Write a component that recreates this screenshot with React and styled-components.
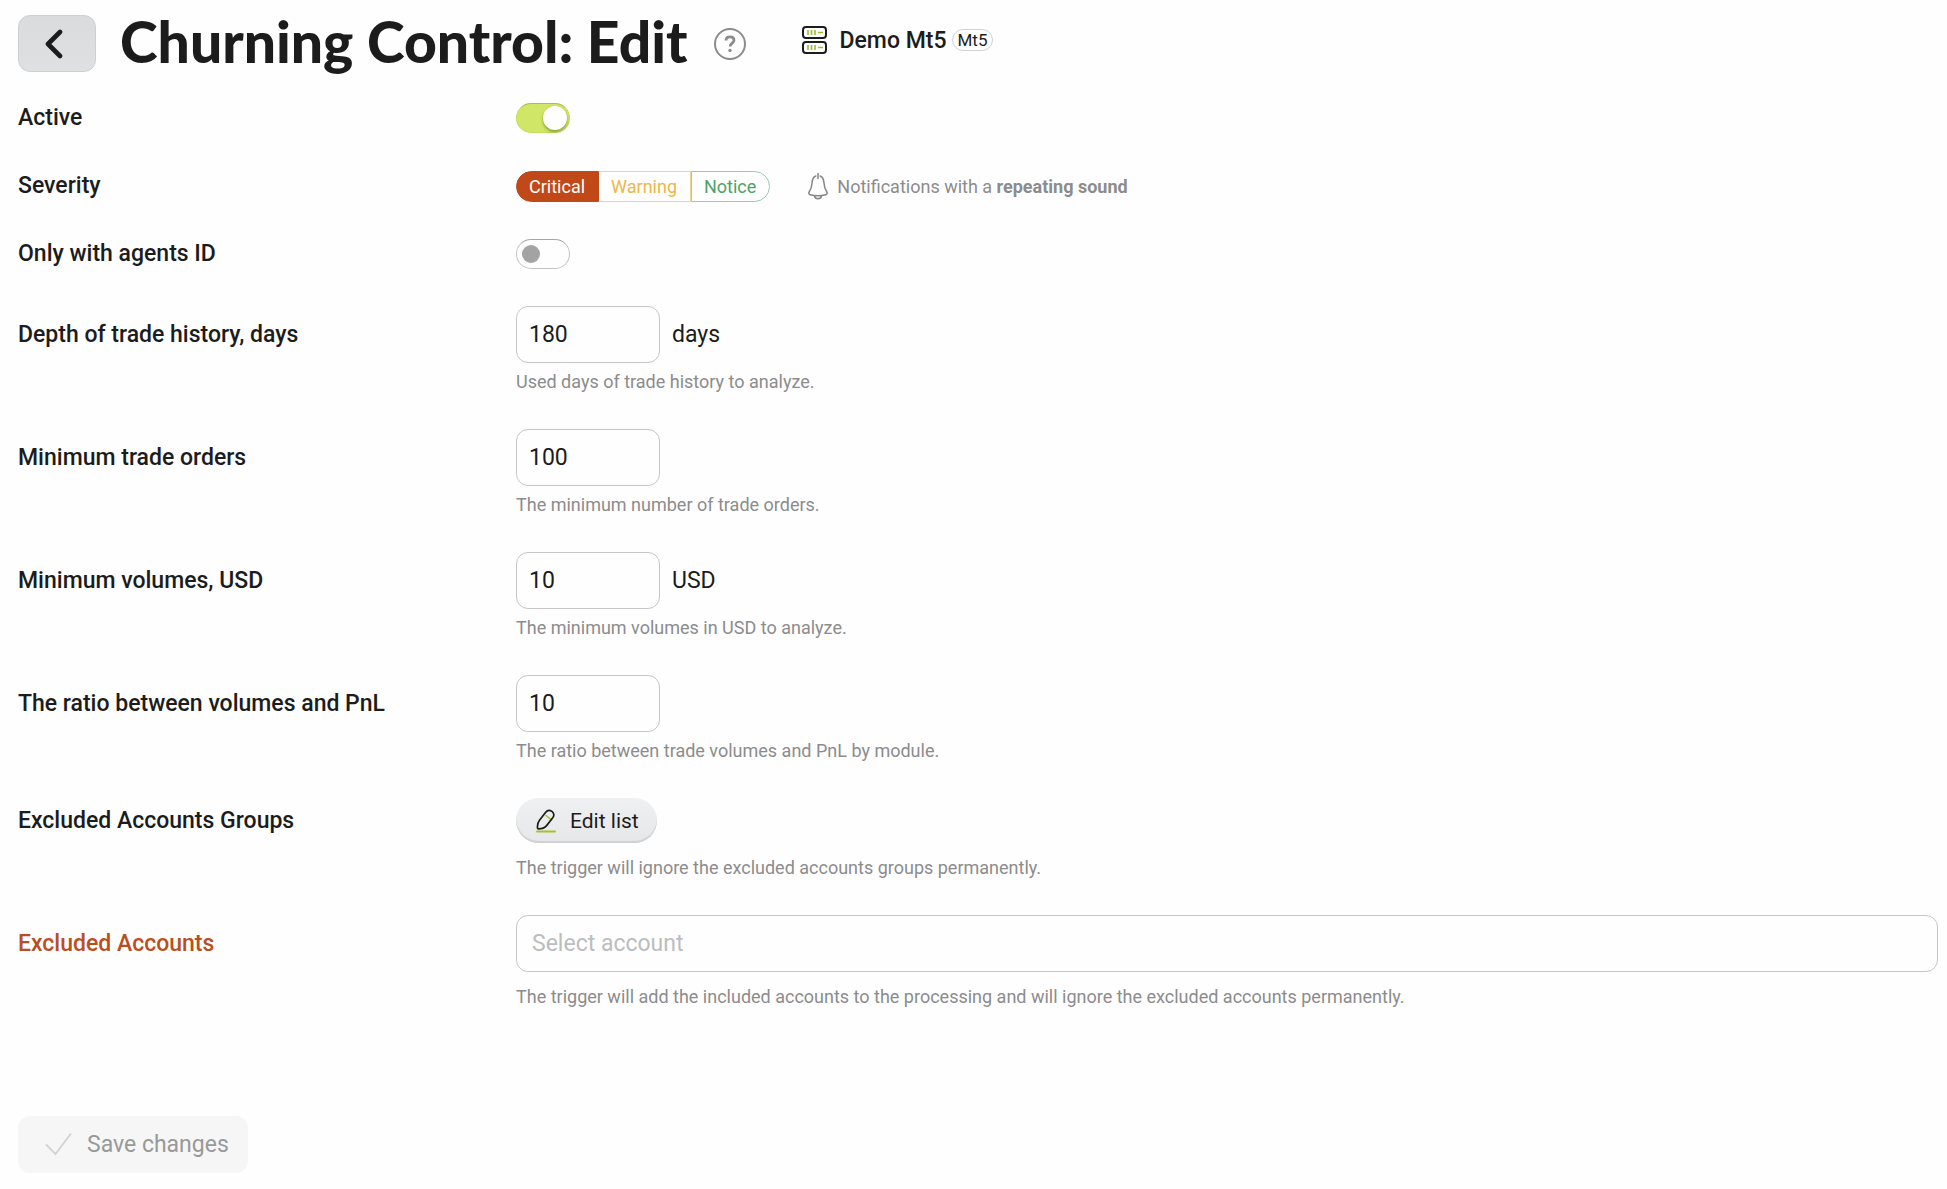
import React, { useState } from 'react';
import styled, { createGlobalStyle, css } from 'styled-components';

const GlobalStyle = createGlobalStyle`
  * {
    box-sizing: border-box;
  }
  body {
    margin: 0;
    background: #fefefe;
    color: #1c1c1c;
    font-family: Roboto, sans-serif;
    font-size: 23px;
  }
  button,
  input {
    font: inherit;
    color: inherit;
  }
`;

const Page = styled.main`
  padding: 15px 9px 16px 18px;
`;

const Header = styled.header`
  display: flex;
  align-items: center;
  height: 57px;
  margin-bottom: 12px;
`;

const BackButton = styled.button`
  display: flex;
  align-items: center;
  justify-content: center;
  width: 78px;
  height: 57px;
  padding: 0 6px 0 0;
  border: 1px solid #cdcfd1;
  border-radius: 12px;
  background: linear-gradient(#d9dbdc, #dee0e1);
  cursor: pointer;
`;

const Title = styled.h1`
  margin: 0 0 0 24px;
  padding-bottom: 4px;
  font-family: Lato, sans-serif;
  font-size: 57px;
  font-weight: 900;
  line-height: 57px;
  white-space: nowrap;
`;

const HelpButton = styled.button`
  display: flex;
  margin: 0 0 0 26px;
  padding: 0;
  border: 0;
  background: none;
  cursor: pointer;
`;

const Server = styled.div`
  display: flex;
  align-items: center;
  align-self: flex-start;
  height: 50px;
  margin-left: 56px;
  font-weight: 500;
`;

const ServerName = styled.span`
  margin: 0 5px 0 12px;
`;

const Badge = styled.span`
  height: 22px;
  padding: 0 5px;
  border: 1px solid #d2d2d2;
  border-radius: 11px;
  font-size: 17px;
  font-weight: 400;
  line-height: 20px;
`;

const Row = styled.div`
  display: grid;
  grid-template-columns: 498px minmax(0, 1fr);
  align-items: center;
  ${({ $compact }) =>
    $compact
      ? css`
          height: 68px;
        `
      : css`
          padding: 18px 0 17px;
        `}
`;

const Label = styled.label`
  font-weight: 500;
  line-height: 30px;
  color: ${({ $error }) => ($error ? '#b94f20' : 'inherit')};
`;

const Control = styled.div`
  display: flex;
  align-items: center;
`;

const Hint = styled.p`
  grid-column: 2;
  margin: ${({ $spaced }) => ($spaced ? '13px' : '7px')} 0 0;
  font-size: 18px;
  line-height: 24px;
  color: #8c8c8c;
`;

const Toggle = styled.input`
  appearance: none;
  display: flex;
  align-items: center;
  width: 54px;
  height: 30px;
  margin: 0;
  padding: 0 5px;
  border: 1px solid #c4c4c4;
  border-top-color: #a6a6a6;
  border-radius: 15px;
  background: #fefefe;
  cursor: pointer;
  &::before {
    content: '';
    width: 18px;
    height: 18px;
    border-radius: 50%;
    background: #a3a3a3;
  }
  &:checked {
    justify-content: flex-end;
    padding: 0 2px;
    border-color: #c5dc5f;
    border-top-color: #a9bc55;
    background: #cfe666;
  }
  &:checked::before {
    width: 24px;
    height: 24px;
    background: #fff;
    box-shadow: 0 2px 3px rgba(70, 90, 0, 0.5);
  }
`;

const Severity = styled.div`
  display: flex;
  font-size: 18px;
`;

const tones = {
  critical: { color: '#c14817', border: '#c14817' },
  warning: { color: '#ecb748', border: '#ead98a' },
  notice: { color: '#4ca268', border: '#98cbb7' },
};

const Option = styled.label`
  height: 31px;
  padding: 0 13px 0 12px;
  border: 1px solid ${({ $tone }) => tones[$tone].border};
  border-left-width: ${({ $tone }) => ($tone === 'warning' ? 0 : '1px')};
  color: ${({ $tone }) => tones[$tone].color};
  line-height: 29px;
  cursor: pointer;
  input {
    appearance: none;
    position: absolute;
    margin: 0;
  }
  &:first-child {
    border-radius: 16px 0 0 16px;
  }
  &:last-child {
    border-radius: 0 16px 16px 0;
  }
  &:has(input:checked) {
    background: ${({ $tone }) => tones[$tone].color};
    color: #fff;
  }
`;

const Notification = styled.span`
  display: flex;
  align-items: center;
  gap: 9px;
  margin-left: 38px;
  font-size: 18px;
  color: #8c8c8c;
`;

const TextInput = styled.input`
  width: ${({ $wide }) => ($wide ? '100%' : '144px')};
  height: 57px;
  padding: 0 ${({ $wide }) => ($wide ? '15px' : '12px')};
  border: 1px solid #c6c6c6;
  border-radius: 12px;
  background: #fefefe;
  &::placeholder {
    color: #bdbdbd;
    opacity: 1;
  }
`;

const Unit = styled.span`
  margin-left: 12px;
`;

const EditButton = styled.button`
  display: flex;
  align-items: center;
  gap: 13px;
  height: 45px;
  padding: 0 18px 0 19px;
  border: 0;
  border-radius: 23px;
  background: linear-gradient(#eef0f1, #e6e7e8);
  box-shadow: inset 0 -2px 1px #cfd0d1;
  font-size: 21px;
  cursor: pointer;
`;

const SaveButton = styled.button`
  display: flex;
  align-items: center;
  gap: 14px;
  height: 57px;
  margin-top: 90px;
  padding: 0 19px 0 26px;
  border: 0;
  border-radius: 12px;
  background: #f6f6f6;
  &:disabled {
    color: #999;
  }
`;

const BackIcon = () => (
  <svg width="18" height="30" viewBox="0 0 18 30" fill="none">
    <path
      d="M15 3 3 15l12 12"
      stroke="#1c1c1c"
      strokeWidth="4.6"
      strokeLinecap="round"
      strokeLinejoin="round"
    />
  </svg>
);

const HelpIcon = () => (
  <svg width="32" height="32" viewBox="0 0 32 32" fill="none" stroke="#8c8c8c">
    <circle cx="16" cy="16" r="15" strokeWidth="2" />
    <path
      d="M12 12.6c0-2.3 1.6-3.8 4-3.8s4 1.4 4 3.5c0 2.8-3.9 3-3.9 6.2"
      strokeWidth="2.8"
    />
    <circle cx="16" cy="22.4" r="1.7" fill="#8c8c8c" stroke="none" />
  </svg>
);

const ServerIcon = () => (
  <svg width="26" height="28" viewBox="0 0 26 28" fill="none">
    <g stroke="#1c1c1c" strokeWidth="2">
      <rect x="1" y="1" width="23" height="11" rx="3" />
      <rect x="1" y="16" width="23" height="11" rx="3" />
    </g>
    <path
      d="M6 4v5M9.5 4v5M13 4v5M16 6.5h5M6 19v5M9.5 19v5M13 19v5M16 21.5h5"
      stroke="#9dbb2d"
      strokeWidth="1.6"
    />
  </svg>
);

const BellIcon = () => (
  <svg
    width="20"
    height="28"
    viewBox="0 0 20 28"
    fill="none"
    stroke="#858585"
    strokeWidth="1.5"
    strokeLinecap="round"
    strokeLinejoin="round"
  >
    <path d="M10 1.5v5M7.8 4C5 5 4.3 7.5 4 11c-.3 4.5-.8 6-2.6 8.5-1 1.5-.6 2.8.8 3.2 5 1.4 10.6 1.4 15.6 0 1.4-.4 1.8-1.7.8-3.2C16.8 17 16.3 15.5 16 11c-.3-3.5-1-6-3.8-7" />
    <path d="M6.5 24c.4 1.7 1.7 2.7 3.5 2.7s3.1-1 3.5-2.7" />
  </svg>
);

const EditIcon = () => (
  <svg width="22" height="24" viewBox="0 0 22 24" fill="none" strokeLinecap="round">
    <path d="m11 6.5 5.5 4.5" stroke="#a4c22f" strokeWidth="1.6" />
    <path
      d="M2.5 18.8c-.3-3.3.2-5.2 2-7.5l6.2-8.1C12.2 1.3 14.8.9 16.9 2.4s2.5 4.2 1 6.2l-6.3 8c-2 2.4-4.7 3.2-8.1 3.2-.7 0-1-.3-1-1Z"
      stroke="#1c1c1c"
      strokeWidth="1.7"
    />
    <path d="M2 22.5h18" stroke="#a4c22f" strokeWidth="1.8" />
  </svg>
);

const CheckIcon = () => (
  <svg width="29" height="26" viewBox="0 0 29 26" fill="none">
    <path d="M2 12.5 11.5 22 27 1.5" stroke="#d4d4d4" strokeWidth="2" />
  </svg>
);

const fields = [
  {
    id: 'depth',
    label: 'Depth of trade history, days',
    value: '180',
    unit: 'days',
    hint: 'Used days of trade history to analyze.',
  },
  {
    id: 'orders',
    label: 'Minimum trade orders',
    value: '100',
    hint: 'The minimum number of trade orders.',
  },
  {
    id: 'volumes',
    label: 'Minimum volumes, USD',
    value: '10',
    unit: 'USD',
    hint: 'The minimum volumes in USD to analyze.',
  },
  {
    id: 'ratio',
    label: 'The ratio between volumes and PnL',
    value: '10',
    hint: 'The ratio between trade volumes and PnL by module.',
  },
];

const App = () => {
  const [severity, setSeverity] = useState('critical');

  return (
    <Page>
      <GlobalStyle />
      <Header>
        <BackButton type="button" aria-label="Back">
          <BackIcon />
        </BackButton>
        <Title>Churning Control: Edit</Title>
        <HelpButton type="button" aria-label="Help">
          <HelpIcon />
        </HelpButton>
        <Server>
          <ServerIcon />
          <ServerName>Demo Mt5</ServerName>
          <Badge>Mt5</Badge>
        </Server>
      </Header>
      <form>
        <Row $compact>
          <Label htmlFor="active">Active</Label>
          <Toggle id="active" type="checkbox" role="switch" defaultChecked />
        </Row>
        <Row $compact>
          <Label as="span" id="severity">
            Severity
          </Label>
          <Control>
            <Severity role="radiogroup" aria-labelledby="severity">
              {['Critical', 'Warning', 'Notice'].map(name => {
                const tone = name.toLowerCase();
                return (
                  <Option key={tone} $tone={tone}>
                    <input
                      type="radio"
                      name="severity"
                      value={tone}
                      checked={severity === tone}
                      onChange={() => setSeverity(tone)}
                    />
                    {name}
                  </Option>
                );
              })}
            </Severity>
            <Notification>
              <BellIcon />
              <span>
                Notifications with a <b>repeating sound</b>
              </span>
            </Notification>
          </Control>
        </Row>
        <Row $compact>
          <Label htmlFor="agents">Only with agents ID</Label>
          <Toggle id="agents" type="checkbox" role="switch" />
        </Row>
        {fields.map(({ id, label, value, unit, hint }) => (
          <Row key={id}>
            <Label htmlFor={id}>{label}</Label>
            <Control>
              <TextInput id={id} type="text" inputMode="numeric" defaultValue={value} />
              {unit && <Unit>{unit}</Unit>}
            </Control>
            <Hint>{hint}</Hint>
          </Row>
        ))}
        <Row>
          <Label htmlFor="groups">Excluded Accounts Groups</Label>
          <Control>
            <EditButton id="groups" type="button">
              <EditIcon />
              Edit list
            </EditButton>
          </Control>
          <Hint $spaced>
            The trigger will ignore the excluded accounts groups permanently.
          </Hint>
        </Row>
        <Row>
          <Label htmlFor="accounts" $error>
            Excluded Accounts
          </Label>
          <TextInput id="accounts" type="text" placeholder="Select account" $wide />
          <Hint $spaced>
            The trigger will add the included accounts to the processing and will
            ignore the excluded accounts permanently.
          </Hint>
        </Row>
        <SaveButton type="submit" disabled>
          <CheckIcon />
          Save changes
        </SaveButton>
      </form>
    </Page>
  );
};

export default App;
